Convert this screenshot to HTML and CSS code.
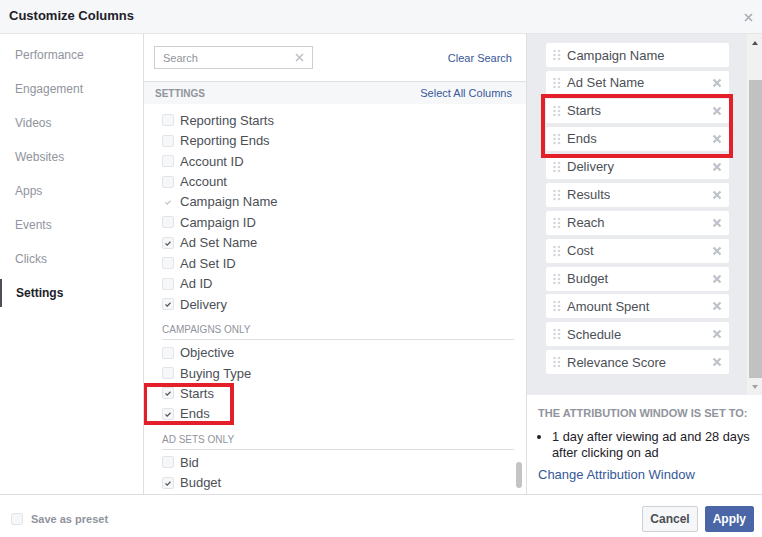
FILE: index.html
```html
<!DOCTYPE html>
<html lang="en">
<head>
    <meta charset="UTF-8">
    <meta name="viewport" content="width=device-width, initial-scale=1.0">
    <title>Customize Columns</title>
    <link rel="stylesheet" href="styles.css">
</head>
<body>
    <div class="dialog">
        <div class="dialog-header">
            <h2>Customize Columns</h2>
            <svg class="close" width="9" height="9" viewBox="0 0 9 9"><path d="M1 1L8 8M8 1L1 8" stroke="#a7abb2" stroke-width="1.6"/></svg>
        </div>

        <div class="dialog-body">
            <ul class="nav">
                <li>Performance</li>
                <li>Engagement</li>
                <li>Videos</li>
                <li>Websites</li>
                <li>Apps</li>
                <li>Events</li>
                <li>Clicks</li>
                <li class="active">Settings</li>
            </ul>

            <div class="picker">
                <div class="search-bar">
                    <div class="search-box">
                        <span>Search</span>
                        <svg width="9" height="9" viewBox="0 0 9 9"><path d="M1 1L8 8M8 1L1 8" stroke="#bec2c9" stroke-width="1.6"/></svg>
                    </div>
                    <a href="#">Clear Search</a>
                </div>
                <div class="section-bar">
                    <span>SETTINGS</span>
                    <a href="#">Select All Columns</a>
                </div>
                <div class="column-list">
                    <div class="option"><span class="box"></span>Reporting Starts</div>
                    <div class="option"><span class="box"></span>Reporting Ends</div>
                    <div class="option"><span class="box"></span>Account ID</div>
                    <div class="option"><span class="box"></span>Account</div>
                    <div class="option"><span class="box locked"><svg viewBox="0 0 12 12"><path d="M3 6.5L5 8.5L9 4.5"/></svg></span>Campaign Name</div>
                    <div class="option"><span class="box"></span>Campaign ID</div>
                    <div class="option"><span class="box checked"><svg viewBox="0 0 12 12"><path d="M3 6.5L5 8.5L9 4.5"/></svg></span>Ad Set Name</div>
                    <div class="option"><span class="box"></span>Ad Set ID</div>
                    <div class="option"><span class="box"></span>Ad ID</div>
                    <div class="option"><span class="box checked"><svg viewBox="0 0 12 12"><path d="M3 6.5L5 8.5L9 4.5"/></svg></span>Delivery</div>

                    <div class="group-label">CAMPAIGNS ONLY</div>
                    <div class="option"><span class="box"></span>Objective</div>
                    <div class="option"><span class="box"></span>Buying Type</div>
                    <div class="option"><span class="box checked"><svg viewBox="0 0 12 12"><path d="M3 6.5L5 8.5L9 4.5"/></svg></span>Starts</div>
                    <div class="option"><span class="box checked"><svg viewBox="0 0 12 12"><path d="M3 6.5L5 8.5L9 4.5"/></svg></span>Ends</div>

                    <div class="group-label">AD SETS ONLY</div>
                    <div class="option"><span class="box"></span>Bid</div>
                    <div class="option"><span class="box checked"><svg viewBox="0 0 12 12"><path d="M3 6.5L5 8.5L9 4.5"/></svg></span>Budget</div>
                </div>
                <div class="list-thumb"></div>
                <div class="highlight mid-mark"></div>
            </div>

            <div class="selected">
                <div class="selected-scroll">
                    <ul class="chosen" id="chosen"></ul>
                    <div class="scrollbar">
                        <div class="arrow up"></div>
                        <div class="track"><div class="thumb"></div></div>
                        <div class="arrow down"></div>
                    </div>
                </div>
                <div class="attribution">
                    <h4>THE ATTRIBUTION WINDOW IS SET TO:</h4>
                    <ul>
                        <li>1 day after viewing ad and 28 days after clicking on ad</li>
                    </ul>
                    <a href="#">Change Attribution Window</a>
                </div>
                <div class="highlight right-mark"></div>
            </div>
        </div>

        <div class="dialog-footer">
            <label class="preset"><span class="box"></span>Save as preset</label>
            <div class="actions">
                <button class="btn-cancel">Cancel</button>
                <button class="btn-apply">Apply</button>
            </div>
        </div>
    </div>

    <script>
        const columns = ["Campaign Name", "Ad Set Name", "Starts", "Ends", "Delivery", "Results",
            "Reach", "Cost", "Budget", "Amount Spent", "Schedule", "Relevance Score"];
        const handle = '<svg class="handle" width="8" height="12" viewBox="0 0 8 12">' +
            '<circle cx="1.5" cy="2" r="1.3"/><circle cx="6" cy="2" r="1.3"/>' +
            '<circle cx="1.5" cy="6" r="1.3"/><circle cx="6" cy="6" r="1.3"/>' +
            '<circle cx="1.5" cy="10" r="1.3"/><circle cx="6" cy="10" r="1.3"/></svg>';
        const remove = '<svg class="remove" width="10" height="10" viewBox="0 0 10 10">' +
            '<path d="M1.5 1.5L8.5 8.5M8.5 1.5L1.5 8.5"/></svg>';

        document.getElementById('chosen').innerHTML = columns.map((name, i) =>
            `<li>${handle}<span>${name}</span>${i === 0 ? '' : remove}</li>`
        ).join('');
    </script>
</body>
</html>
```

FILE: styles.css
```css
body {
    margin: 0;
    font-family: "Liberation Sans", Arial, sans-serif;
    background: #fff;
}
.dialog {
    width: 762px;
    height: 537px;
    display: flex;
    flex-direction: column;
    overflow: hidden;
}
.dialog-header {
    height: 30px;
    flex-shrink: 0;
    background: #f6f7f9;
    border-bottom: 1px solid #e5e5e5;
    display: flex;
    align-items: center;
    justify-content: space-between;
    padding: 0 9px 3px 9px;
}
.dialog-header h2 {
    margin: 0;
    font-size: 13px;
    font-weight: bold;
    color: #1d2129;
}
.close {
    margin-top: 4px;
}

.dialog-body {
    flex: 1;
    display: flex;
    min-height: 0;
}

/* left nav */
.nav {
    width: 143px;
    flex-shrink: 0;
    margin: 0;
    padding: 4px 0 0 0;
    list-style: none;
    border-right: 1px solid #dddfe2;
}
.nav li {
    height: 34px;
    line-height: 34px;
    padding-left: 15px;
    font-size: 12px;
    color: #90949c;
    position: relative;
}
.nav li.active {
    color: #1d2129;
    font-weight: bold;
    padding-left: 16px;
}
.nav li.active::before {
    content: "";
    position: absolute;
    left: 0;
    top: 3px;
    bottom: 3px;
    width: 2px;
    background: #4b4f56;
}

/* middle picker */
.picker {
    width: 382px;
    flex-shrink: 0;
    border-right: 1px solid #dddfe2;
    position: relative;
    overflow: hidden;
}
.search-bar {
    height: 47px;
    border-bottom: 1px solid #dddfe2;
    display: flex;
    align-items: center;
    justify-content: space-between;
    padding: 0 14px 0 10px;
}
.search-box {
    width: 159px;
    height: 23px;
    box-sizing: border-box;
    border: 1px solid #ccd0d5;
    display: flex;
    align-items: center;
    justify-content: space-between;
    padding: 0 8px 0 8px;
    font-size: 11px;
    color: #90949c;
}
a {
    color: #365899;
    text-decoration: none;
}
.search-bar a, .section-bar a {
    font-size: 11px;
}
.section-bar {
    height: 22px;
    background: #f6f7f9;
    display: flex;
    align-items: center;
    justify-content: space-between;
    padding: 0 14px 0 11px;
}
.section-bar span {
    font-size: 10px;
    font-weight: bold;
    color: #90949c;
}
.column-list {
    padding: 6px 12px 0 18px;
}
.option {
    height: 20.45px;
    display: flex;
    align-items: center;
    font-size: 13px;
    color: #4b4f56;
}
.box {
    width: 12px;
    height: 12px;
    box-sizing: border-box;
    border: 1px solid #e2e4e8;
    border-radius: 2px;
    background: #f6f7f9;
    margin-right: 6px;
    flex-shrink: 0;
    display: flex;
}
.box svg {
    width: 10px;
    height: 10px;
    fill: none;
    stroke: #4b4f56;
    stroke-width: 1.4;
}
.box.locked {
    border-color: #fff;
    background: #fff;
}
.box.locked svg {
    stroke: #bec2c9;
}
.group-label {
    height: 20px;
    padding-top: 5px;
    border-bottom: 1px solid #dddfe2;
    margin-bottom: 2px;
    font-size: 10px;
    color: #90949c;
    display: flex;
    align-items: center;
}
.list-thumb {
    position: absolute;
    right: 4px;
    top: 428px;
    width: 6px;
    height: 26px;
    border-radius: 3px;
    background: #c4c4c4;
}
.highlight {
    position: absolute;
    border: 4px solid #e3202a;
    box-sizing: border-box;
}
.mid-mark {
    left: -1px;
    top: 349px;
    width: 91px;
    height: 42px;
}

/* right: selected columns */
.selected {
    flex: 1;
    display: flex;
    flex-direction: column;
    position: relative;
}
.selected-scroll {
    height: 361px;
    flex-shrink: 0;
    background: #e9ebee;
    display: flex;
    justify-content: space-between;
}
.chosen {
    list-style: none;
    margin: 0;
    padding: 9px 0 0 19px;
    width: 183px;
}
.chosen li {
    height: 24px;
    margin-bottom: 3.95px;
    background: #fff;
    border-radius: 2px;
    display: flex;
    align-items: center;
    padding: 0 7px 0 7px;
    font-size: 13px;
    color: #4b4f56;
}
.handle {
    fill: #d3d6db;
    margin-right: 6px;
    flex-shrink: 0;
}
.chosen li span {
    flex: 1;
}
.remove {
    fill: none;
    stroke: #bec2c9;
    stroke-width: 2.2;
}
.scrollbar {
    width: 15px;
    display: flex;
    flex-direction: column;
    background: #f1f1f1;
}
.arrow {
    height: 17px;
    display: flex;
    align-items: center;
    justify-content: center;
}
.arrow::after {
    content: "";
    border-left: 3.5px solid transparent;
    border-right: 3.5px solid transparent;
}
.arrow.up::after {
    border-bottom: 4px solid #505050;
}
.arrow.down::after {
    border-top: 4px solid #a3a3a3;
}
.track {
    flex: 1;
}
.thumb {
    margin: 29px 0 0 2px;
    height: 298px;
    background: #c1c1c1;
}
.attribution {
    flex: 1;
    padding: 11px 2px 0 11px;
    background: #fff;
}
.attribution h4 {
    margin: 0;
    font-size: 11px;
    line-height: 15px;
    color: #90949c;
}
.attribution ul {
    margin: 8px 0 0 0;
    padding-left: 14px;
    font-size: 12.8px;
    line-height: 16px;
    color: #1d2129;
}
.attribution a {
    display: block;
    margin-top: 6px;
    font-size: 13px;
    line-height: 16px;
}
.right-mark {
    left: 14px;
    top: 60px;
    width: 192px;
    height: 64px;
}

/* footer */
.dialog-footer {
    height: 43px;
    flex-shrink: 0;
    box-sizing: border-box;
    border-top: 1px solid #dddfe2;
    padding: 5px 8px 0 11px;
    display: flex;
    align-items: center;
    justify-content: space-between;
}
.preset {
    display: flex;
    align-items: center;
    font-size: 11px;
    font-weight: bold;
    color: #90949c;
}
.preset .box {
    margin-right: 8px;
}
.actions {
    display: flex;
    gap: 7px;
}
.actions button {
    height: 26px;
    font-family: "Liberation Sans", Arial, sans-serif;
    font-size: 12px;
    font-weight: bold;
    border-radius: 2px;
    padding: 0 7px;
    cursor: pointer;
}
.btn-cancel {
    background: #f6f7f9;
    border: 1px solid #ced0d4;
    color: #4b4f56;
}
.btn-apply {
    background: #4a66a6;
    border: 1px solid #4a66a6;
    color: #fff;
    padding: 0 8px;
}
```
